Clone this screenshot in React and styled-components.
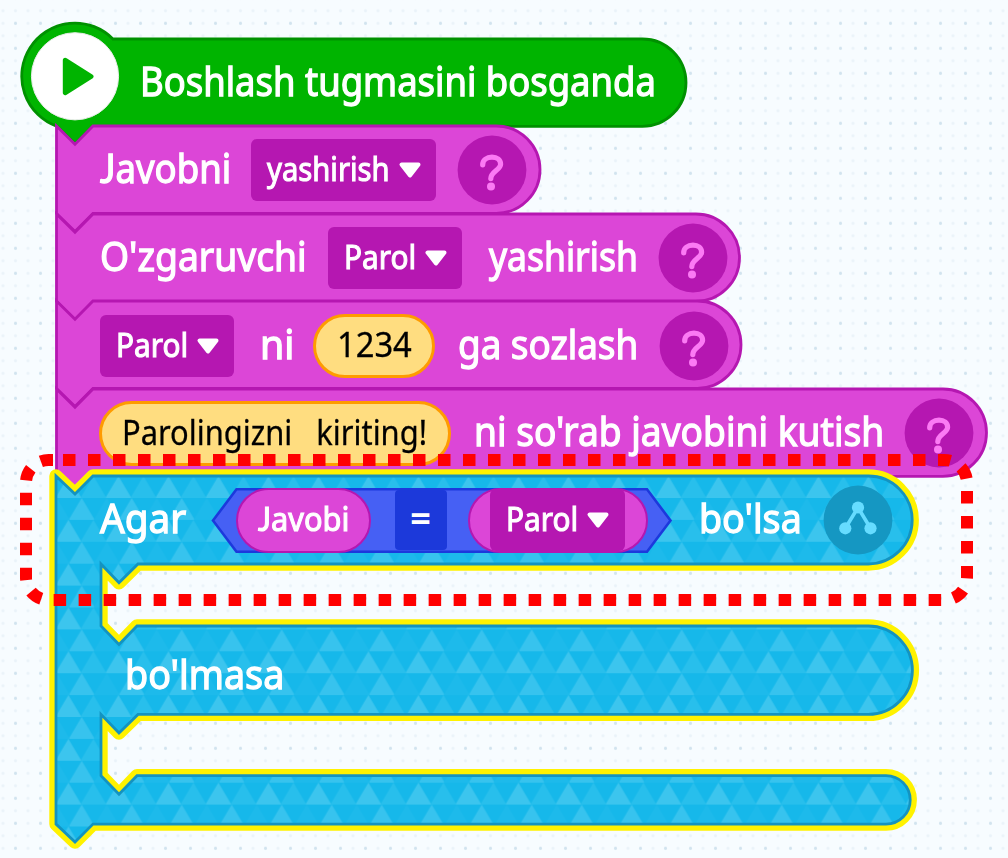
import React, { useLayoutEffect, useRef, useState } from "react";
import styled, { createGlobalStyle } from "styled-components";

const GlobalStyle = createGlobalStyle`
  * { box-sizing: border-box; }
  body { margin: 0; overflow: hidden; }
`;

const PURPLE = "#dc46d7";
const PURPLE_DARK = "#b517b1";

const Workspace = styled.main`
  position: relative;
  width: 1008px;
  height: 858px;
  overflow: hidden;
  background-color: #f7fcff;
  background-image: radial-gradient(circle, #d2e4ef 1px, transparent 2px),
    radial-gradient(circle, #eaf3f9 1px, transparent 2px);
  background-size: 25px 25px, 12.5px 12.5px;
  background-position: 3px 10.8px, 9.25px 17.05px;
  font-family: "Noto Sans", sans-serif;
`;

const Stack = styled.div`
  display: flex;
  flex-direction: column;
  align-items: flex-start;
  padding: 39px 0 0 56px;
`;

const Block = styled.section`
  position: relative;
  display: flex;
  align-items: center;
  width: ${(p) => p.$width}px;
  height: 87.4px;
  padding-top: ${(p) => p.$drop ?? 1}px;
  padding-left: ${(p) => p.$inset ?? 44}px;
`;

const ConditionBlock = styled.section`
  position: relative;
  width: 856px;
  height: 348px;
`;

const Arm = styled.div`
  position: relative;
  display: flex;
  align-items: center;
  height: 88px;
  margin-bottom: ${(p) => p.$mouth || 0}px;
  padding-top: ${(p) => p.$drop || 0}px;
  padding-left: ${(p) => p.$inset}px;
`;

const Shape = styled.svg`
  position: absolute;
  left: 0;
  top: 0;
  width: 100%;
  height: 100%;
  overflow: visible;
`;

const Label = styled.div`
  position: relative;
  flex: none;
  width: ${(p) => p.$width}px;
  margin-left: ${(p) => p.$gap || 0}px;
  padding-bottom: ${(p) => p.$lift ?? 4}px;
  color: ${(p) => p.$color || "#fff"};
  font-size: ${(p) => p.$size || 40.5}px;
  line-height: 52px;
  white-space: pre;
  -webkit-text-stroke: ${(p) => p.$stroke ?? 1.3}px currentColor;
`;

const Squeezed = styled.span`
  display: inline-block;
  transform-origin: 0 50%;
`;

const ShortJ = styled.span`
  font-family: "Lato", "Noto Sans", sans-serif;
`;

const Dropdown = styled.div`
  position: relative;
  flex: none;
  display: flex;
  align-items: center;
  width: ${(p) => p.$width}px;
  height: 62px;
  margin-left: ${(p) => p.$gap || 0}px;
  padding-left: 16px;
  border-radius: 6px;
  background: ${PURPLE_DARK};
`;

const Caret = styled.svg`
  flex: none;
  width: 24px;
  height: 18px;
  margin-left: ${(p) => p.$gap ?? 8}px;
`;

const ValuePill = styled.div`
  position: relative;
  flex: none;
  display: flex;
  align-items: center;
  width: ${(p) => p.$width}px;
  height: 64.5px;
  margin-left: ${(p) => p.$gap || 0}px;
  padding-left: ${(p) => p.$inset}px;
  border: 3px solid #ff9b00;
  border-radius: 33px;
  background: #ffdd80;
`;

const VariablePill = styled(ValuePill)`
  border: 2.5px solid ${PURPLE_DARK};
  background: ${PURPLE};
`;

const Comparison = styled.div`
  position: relative;
  flex: none;
  display: flex;
  align-items: center;
  width: 461px;
  height: 65px;
  margin-left: ${(p) => p.$gap}px;
  padding-left: 24.5px;
`;

const Operator = styled.div`
  position: relative;
  display: flex;
  flex-direction: column;
  align-items: center;
  justify-content: center;
  width: 52px;
  height: 60px;
  margin: 0 21px 0 24px;
  border-radius: 4px;
  background: #1c39da;
  color: #fff;
`;

const OperatorText = styled.span`
  font-size: 36px;
  font-weight: 700;
  line-height: 40px;
  padding-bottom: 5px;
`;

const Badge = styled.svg`
  position: relative;
  flex: none;
  width: 70px;
  height: 70px;
  margin-left: ${(p) => p.$gap}px;
`;

const Highlight = styled.svg`
  position: absolute;
  inset: 0;
  width: 1008px;
  height: 858px;
  pointer-events: none;
`;

function Text({ children, width, ...rest }) {
  const ref = useRef(null);
  const [scale, setScale] = useState(1);
  useLayoutEffect(() => {
    setScale(width / ref.current.offsetWidth);
  }, [width]);
  return (
    <Label $width={width} {...rest}>
      <Squeezed ref={ref} style={{ transform: `scaleX(${scale})` }}>
        {children}
      </Squeezed>
    </Label>
  );
}

function Select({ text, textWidth, width, gap, caretGap }) {
  return (
    <Dropdown $width={width} $gap={gap}>
      <Text width={textWidth} $size={33.5} $lift={4} $stroke={1.1}>{text}</Text>
      <Caret $gap={caretGap} viewBox="0 0 24 18">
        <path d="M3.5 3.5H20.5L12 14.5Z" fill="#fff" stroke="#fff" strokeWidth="4" strokeLinejoin="round" />
      </Caret>
    </Dropdown>
  );
}

function Help({ gap }) {
  return (
    <Badge $gap={gap} viewBox="-35 -35 70 70">
      <circle r="34.4" fill={PURPLE_DARK} />
      <path
        d="M-9.3 -5.2C-9.3 -10 -5.3 -12.8 0 -12.8C5 -12.8 8.6 -10 8.6 -5.8C8.6 0 -1.2 1.2 -1.2 8.6"
        fill="none" stroke="#fb7af4" strokeWidth="5.2" strokeLinecap="round"
      />
      <circle cx="-1" cy="16.4" r="4" fill="#fb7af4" />
    </Badge>
  );
}

function PurpleBlock({ width, drop, children }) {
  const r = 43.7;
  return (
    <Block $width={width} $drop={drop}>
      <Shape>
        <path
          d={`M0.5 0L19 18.2L37 0H${width - r}a${r} ${r} 0 0 1 0 ${r * 2}H37L19 105.6L0.5 87.4Z`}
          fill={PURPLE} stroke={PURPLE_DARK} strokeWidth="2.8"
        />
      </Shape>
      {children}
    </Block>
  );
}

function StartBlock() {
  return (
    <Block $width={630} $inset={84} $drop={0}>
      <Shape>
        <path
          d="M56.9 0H586.3a43.7 43.7 0 0 1 0 87.4H37L19 105L1.1 87.4A53.2 53.2 0 1 1 56.9 0Z"
          fill="#00b400" stroke="#009100" strokeWidth="2.8"
        />
        <circle cx="19" cy="37.3" r="43.6" fill="#fff" stroke="#e8ece8" strokeWidth="1" />
        <path d="M9.3 21.3L35 37.5L9.3 53.7Z" fill="#00b400" stroke="#00b400" strokeWidth="5" strokeLinejoin="round" />
      </Shape>
      <Text width={515.5}>Boshlash tugmasini bosganda</Text>
    </Block>
  );
}

const IF_PATH =
  "M0 0L19 18L37 0H812.2a44 44 0 0 1 0 88H82L63 106.7L45 88V150L63 168.5L81 150H812.2a44 44 0 0 1 0 88.4H82L63 257L45 238.4V299.7L63 318.3L81 299.7H830a24.2 24.2 0 0 1 0 48.4H37L19 366L0 348.1Z";

function IfShape() {
  return (
    <Shape>
      <defs>
        <pattern id="triangles" width="50" height="43.8" patternUnits="userSpaceOnUse" x="0.7" y="22">
          <rect width="50" height="43.8" fill="#16b8ea" />
          <path d="M25 0L38 21.9H12Z" fill="#37c3ee" />
          <path d="M0 0L13 21.9H-13ZM50 0L63 21.9H37Z" fill="#1dbaeb" />
          <path d="M11.7 21.9L24.7 43.8H-1.3ZM61.7 21.9L74.7 43.8H48.7Z" fill="#3cc5ee" />
          <path d="M36.7 21.9L49.7 43.8H23.7Z" fill="#28bfec" />
        </pattern>
        <filter id="soft" x="-5%" y="-5%" width="110%" height="110%">
          <feGaussianBlur stdDeviation="0.7" />
        </filter>
      </defs>
      <path d={IF_PATH} fill="none" stroke="#fff200" strokeWidth="13.4" strokeLinejoin="round" filter="url(#soft)" />
      <path d={IF_PATH} fill="url(#triangles)" stroke="#1493c0" strokeWidth="2.8" />
    </Shape>
  );
}

export default function App() {
  return (
    <>
      <GlobalStyle />
      <Workspace>
        <Stack>
          <StartBlock />
          <PurpleBlock width={484} drop={0}>
            <Text width={131}><ShortJ>J</ShortJ>avobni</Text>
            <Select text="yashirish" textWidth={123} width={185} gap={20} />
            <Help gap={21} />
          </PurpleBlock>
          <PurpleBlock width={683.5}>
            <Text width={207}>O'zgaruvchi</Text>
            <Select text="Parol" textWidth={72} width={134} gap={21} caretGap={8} />
            <Text width={149} $gap={27}>yashirish</Text>
            <Help gap={19.5} />
          </PurpleBlock>
          <PurpleBlock width={685} drop={2}>
            <Select text="Parol" textWidth={72} width={134} caretGap={8} />
            <Text width={34} $gap={26}>ni</Text>
            <ValuePill $width={122} $gap={19} $inset={21}>
              <Text width={75} $color="#000" $size={34} $lift={3} $stroke={0.3}>1234</Text>
            </ValuePill>
            <Text width={180} $gap={23}>ga sozlash</Text>
            <Help gap={21} />
          </PurpleBlock>
          <PurpleBlock width={930.5} drop={2}>
            <ValuePill $width={352} $gap={-1} $inset={19.5}>
              <Text width={305} $color="#000" $size={34} $lift={3} $stroke={0.3}>Parolingizni   kiriting!</Text>
            </ValuePill>
            <Text width={410} $gap={23}>ni so'rab javobini kutish</Text>
            <Help gap={19.5} />
          </PurpleBlock>

          <ConditionBlock>
            <IfShape />
            <Arm $inset={44} $mouth={62} $drop={1}>
              <Text width={86}>Agar</Text>
              <Comparison $gap={25}>
                <Shape viewBox="0 0 461 65">
                  <path d="M2 32.5L25.5 1.3H436L459.5 32.5L436 63.7H25.5Z" fill="#4660f4" stroke="#1c39dc" strokeWidth="2.6" />
                </Shape>
                <VariablePill $width={135} $inset={20}>
                  <Text width={91} $size={33.5} $lift={4} $stroke={1.1}><ShortJ>J</ShortJ>avobi</Text>
                </VariablePill>
                <Operator><OperatorText>=</OperatorText></Operator>
                <VariablePill $width={180} $inset={20}>
                  <Select text="Parol" textWidth={72} width={135} caretGap={8} />
                </VariablePill>
              </Comparison>
              <Text width={103} $gap={27}>bo'lsa</Text>
              <Badge $gap={21} viewBox="-35 -35 70 70">
                <circle r="34.4" fill="#1597c2" />
                <path d="M-12.7 8.3L0 -12.5L12.5 8.3" fill="none" stroke="#66dcff" strokeWidth="3.6" />
                <circle cx="-12.7" cy="8.3" r="6.1" fill="#66dcff" />
                <circle cx="0" cy="-12.5" r="6.1" fill="#66dcff" />
                <circle cx="12.5" cy="8.3" r="6.1" fill="#66dcff" />
              </Badge>
            </Arm>
            <Arm $inset={68.5} $drop={12}>
              <Text width={159}>bo'lmasa</Text>
            </Arm>
          </ConditionBlock>
        </Stack>
        <Highlight>
          <path
            d="M63 460H944.4a22.6 22.6 0 0 1 22.6 22.6V577.4a22.6 22.6 0 0 1 -22.6 22.6H48.6a22.6 22.6 0 0 1 -22.6 -22.6V482.6a22.6 22.6 0 0 1 22.6 -22.6H53"
            fill="none" stroke="#f00" strokeWidth="12" strokeDasharray="12.5 12.5"
          />
        </Highlight>
      </Workspace>
    </>
  );
}
